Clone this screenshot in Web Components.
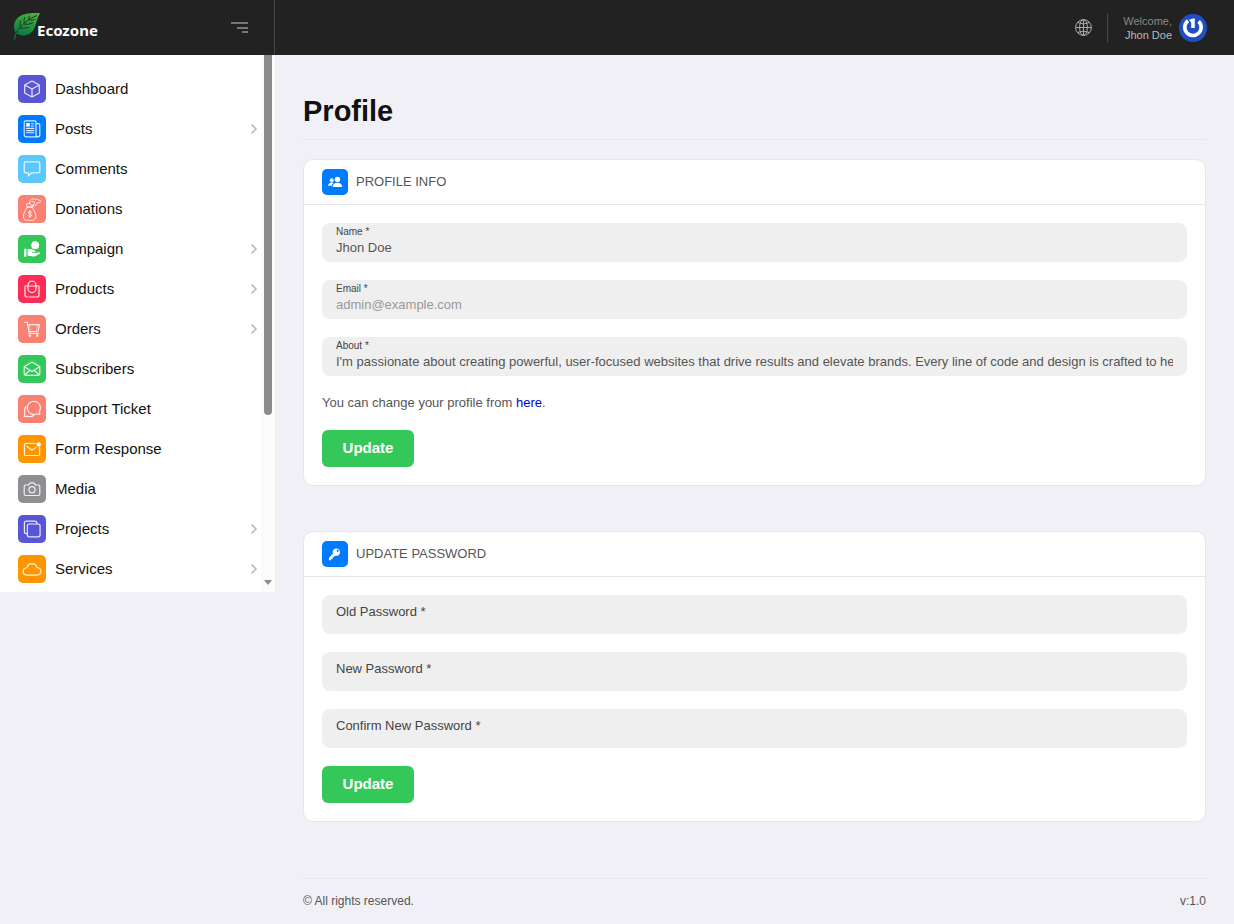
<!DOCTYPE html>
<html lang="en">
<head>
<meta charset="utf-8">
<meta name="viewport" content="width=device-width, initial-scale=1">
<title>Ecozone - Profile</title>
<style>
  html { background: #f1f0f6; }
  body { margin: 0; font-family: "Liberation Sans", Arial, sans-serif; font-size: 13px; line-height: 18px; color: #555; }
</style>
</head>
<body>
<admin-app></admin-app>

<script>
const icons = {
  cube: '<path d="M14 6 21.3 10v8L14 22 6.7 18v-8ZM6.7 10 14 14l7.3-4M14 14v8"/>',
  news: '<path d="M18 20.2V7.2Q18 5.8 16.6 5.8H7.6Q6.2 5.8 6.2 7.2V19.6Q6.2 21.8 8.4 21.8H20Q18 21.6 18 19.8M18 8.6h2.4Q21.8 8.6 21.8 10v9.8q0 2-1.9 2"/><path d="M13.4 8.7h2.4M13.4 11h2.4M8.5 13.4h7.3M8.5 15.6h7.3M8.5 17.8h7.3" stroke-width="1.1"/><path fill="#fff" stroke="none" d="M8.2 8h3.6v3.6H8.2z"/>',
  chat: '<path d="M7.8 6.8h12.4q1.6 0 1.6 1.6v7.8q0 1.6-1.6 1.6h-6.4l-3.4 3v-3H7.8q-1.6 0-1.6-1.6V8.400q0-1.600 1.600-1.600Z"/>',
  donate: '<g stroke-width=".9"><path d="M9.400 12.200c-2 2.600-3.900 6-3.900 9.300 0 2.600 1.400 3.900 3.700 3.900h5c2.400 0 3.700-1.300 3.700-3.900 0-3.300-1.900-6.700-3.900-9.300ZM8.600 12.200h6.200M9.600 11.800 8.300 9.300q2.400-2 4-.8M14 11.600l1-2M11.400 8.600c0-2.600 1-4.400 3.400-4.700l4.400.4 3.400 1.500M12.200 8.800q1 2.200 2.700 2.200 4 0 3.600-2.700l3.700-1M13.800 6.600h2.200l.9 1.700-1.900 1.800"/><path d="M13.700 17.300q-1.800-1.300-3.100-.2-1 1.300 1.200 1.900 2.300.6 1.400 2-1.300 1.200-3.100-.2M11.900 15.600v6.800"/></g>',
  hand: '<g fill="#fff" stroke="none"><path d="M6.200 13.800h2.200v7.900H6.200zM9.600 14h3.600l3.800 1.500q1 .8.300 1.700h-3.200v.8h3.700l2.900-.7q1.500.2 1.300 1.300L16.800 21.400q-.8.300-1.800.1L9.600 20.400Z"/><circle cx="17.200" cy="10.200" r="3.900"/></g>',
  bag: '<path d="M7 11h14v9q0 2-2 2H9q-2 0-2-2Z" stroke-linejoin="round"/><path d="M10 13.500V10.200a4 4 0 0 1 8 0v3.300a4 4 0 0 1-8 0Z"/>',
  cart: '<path d="M6.700 7.300h2.600L11.200 18.400h9M9.700 9.700h11.700l-1.400 6.800H11"/><path d="M12.200 15.800 11.500 10M19.300 10l-.8 6" stroke-width=".6"/><circle cx="11.900" cy="20.600" r=".7"/><circle cx="19.400" cy="20.600" r=".7"/>',
  mailopen: '<path d="M6.200 11.600 14 7l7.800 4.600v7.200q0 1.600-1.600 1.600H7.800q-1.600 0-1.600-1.600ZM6.800 12l7.200 4.600L21.200 12M7.200 19.700l4.500-4.400M20.800 19.700l-4.500-4.400"/>',
  bubbles: '<path d="M16 6.300a6.600 6.600 0 0 1 5.400 10.100l.4 3-3-.6A6.600 6.600 0 1 1 16 6.300Z"/><path d="M8.200 11.500Q5.700 14 6.900 17.800L6.200 21.600l3.600-.5q3.200 1.400 5.800-.5"/>',
  mail: '<path d="M17.600 8.300H8Q6.400 8.300 6.400 9.900v9q0 1.600 1.600 1.600h12q1.600 0 1.600-1.600v-6.400M8.700 11.300 14 15.300l4-3"/><circle cx="20.600" cy="9.400" r="2.200" fill="#fff" stroke="none"/>',
  camera: '<path d="M7.700 10h2.800l1.700-2.100h3.600l1.700 2.100h2.800q1.500 0 1.500 1.500V19q0 1.500-1.500 1.500H7.700Q6.200 20.500 6.200 19v-7.500Q6.200 10 7.700 10Z"/><circle cx="14" cy="14.800" r="3.100"/>',
  copies: '<path d="M18.900 9V8q0-1.900-1.900-1.900H8.300Q6.400 6.100 6.400 8v8.700q0 1.900 1.900 1.900h1"/><rect x="9.300" y="9" width="12.800" height="12.800" rx="2"/>',
  cloud: '<path d="M9.200 20.100q-4-.2-4.100-3.700.2-3 3.700-3.500.9-4.200 5.200-4.300 4 .1 5 4 3.900.3 4 3.700-.2 3.600-3.800 3.800Z"/>',
  people: '<g fill="#fff" stroke="none"><circle cx="16.600" cy="11.200" r="2.900"/><path d="M11.400 19.400q.2-4.300 5.200-4.500 5 .2 5.200 4.500Z"/><circle cx="10.500" cy="12.100" r="2.100"/><path d="M6.600 18q.3-3.200 4-3.400 1.100 0 2 .4-1.900 1.200-2.100 3Z"/></g>',
  key: '<path fill="#fff" stroke="none" fill-rule="evenodd" d="M14.300 15.800a4 4 0 1 0-2.500-2.300L7.400 18.200v2.600h2.300l.3-1.500h1.300l.2-1.500ZM16.900 9.400a1.200 1.200 0 1 1 0 2.400 1.200 1.200 0 0 1 0-2.400Z"/>'
};

/* Registers a component whose shadow root is cloned from a template. */
function define(name, build) {
  customElements.define(name, class extends HTMLElement {
    constructor() {
      super();
      this.attachShadow({ mode: 'open' });
    }
    connectedCallback() {
      if (this.shadowRoot.childNodes.length) return;
      const t = document.createElement('template');
      t.innerHTML = build(n => this.getAttribute(n) || '', this);
      this.shadowRoot.append(t.content.cloneNode(true));
    }
  });
}

define('icon-tile', a => `
  <style>
    :host { display: block; flex: none; width: var(--tile, 28px); height: var(--tile, 28px); border-radius: 5px; background: ${a('color')}; }
    svg { display: block; width: 100%; height: 100%; }
  </style>
  <svg viewBox="0 0 28 28" fill="none" stroke="#fff" stroke-opacity=".85" stroke-width="1.200" stroke-linejoin="round" stroke-linecap="round" aria-hidden="true">${icons[a('icon')]}</svg>`);

define('menu-item', (a, el) => `
  <style>
    :host { display: block; }
    a { display: flex; align-items: center; gap: 9px; color: #111; font-size: 15px; line-height: 20px; text-decoration: none; }
    span { flex: 1; }
    .chevron { width: 8px; height: 12px; margin-right: 3px; fill: none; stroke: #b4b4b8; stroke-width: 1.500; }
  </style>
  <a href="#">
    <icon-tile icon="${a('icon')}" color="${a('color')}"></icon-tile>
    <span><slot></slot></span>
    ${el.hasAttribute('expandable') ? '<svg class="chevron" viewBox="0 0 8 12" aria-hidden="true"><path d="M1.500 1.500 6 6l-4.500 4.500"/></svg>' : ''}
  </a>`);

define('side-menu', () => `
  <style>
    :host { display: flex; background: #fff; }
    nav { flex: 1; display: flex; flex-direction: column; gap: 12px; padding: 20px 0 9px 18px; }
    .track { width: 14px; background: #fbfbfb; display: flex; flex-direction: column; align-items: center; justify-content: space-between; padding-bottom: 7px; box-sizing: border-box; }
    .thumb { width: 8px; height: 68%; background: #8b8b8b; border-radius: 0 0 4px 4px; }
    .arrow { border: 4px solid transparent; border-top: 5px solid #8b8b8b; border-bottom: 0; }
  </style>
  <nav aria-label="Main">
    <menu-item icon="cube" color="#5856d6">Dashboard</menu-item>
    <menu-item icon="news" color="#007aff" expandable>Posts</menu-item>
    <menu-item icon="chat" color="#5ac8fa">Comments</menu-item>
    <menu-item icon="donate" color="#fa8072">Donations</menu-item>
    <menu-item icon="hand" color="#34c759" expandable>Campaign</menu-item>
    <menu-item icon="bag" color="#ff2d55" expandable>Products</menu-item>
    <menu-item icon="cart" color="#fa8072" expandable>Orders</menu-item>
    <menu-item icon="mailopen" color="#34c759">Subscribers</menu-item>
    <menu-item icon="bubbles" color="#fa8072">Support Ticket</menu-item>
    <menu-item icon="mail" color="#ff9500">Form Response</menu-item>
    <menu-item icon="camera" color="#8e8e93">Media</menu-item>
    <menu-item icon="copies" color="#5856d6" expandable>Projects</menu-item>
    <menu-item icon="cloud" color="#ff9500" expandable>Services</menu-item>
  </nav>
  <div class="track" aria-hidden="true"><div class="thumb"></div><div class="arrow"></div></div>`);

define('top-bar', () => `
  <style>
    :host { display: flex; height: 55px; background: #222; color: #bbb; }
    svg { display: block; }
    .brand { flex: none; width: 275px; box-sizing: border-box; border-right: 1px solid #444; display: flex; align-items: center; justify-content: space-between; padding: 0 25px 0 12px; }
    .logo { display: flex; align-items: center; color: #fff; text-decoration: none; font: bold 15px/24px "Noto Sans", sans-serif; }
    .logo svg { width: 29px; height: 30px; margin: 0 -4px 4px 0; }
    .logo span { padding-top: 4px; }
    button { border: 0; padding: 0; background: none; cursor: pointer; }
    .right { flex: 1; display: flex; align-items: center; justify-content: flex-end; padding-right: 27px; }
    .user { display: flex; align-items: center; gap: 7px; margin-left: 15px; padding-left: 15px; border-left: 1px solid #4a4a4a; color: inherit; text-decoration: none; text-align: right; font-size: 11px; line-height: 14px; }
    .hi { color: #888; }
  </style>
  <div class="brand">
    <a class="logo" href="#">
      <svg viewBox="0 0 29 30" aria-hidden="true">
        <defs><linearGradient id="leaf" x1=".7" y1="0" x2=".3" y2="1"><stop offset="0" stop-color="#4caf3c"/><stop offset="1" stop-color="#087a43"/></linearGradient></defs>
        <path fill="url(#leaf)" d="M28.300 2.200C21 1.600 10 2 5 7.500 1 12 1.600 18 3.600 21.500c5.400 5 14.600 3.700 18.400-3.500 2.700-5.500 2.800-11.500 6.300-15.800Z"/>
        <path d="M2.600 28.500q0-4.500 3.200-9" fill="none" stroke="#0d7d43" stroke-width="1.200"/>
        <path d="M3.800 22.500C8 15 15 8.500 25 4.500M8.500 16.300Q7.500 13 8.600 9.500M12.400 12.300q-1-3 .2-6M17 8.800q-.6-2 .4-4M8 17q4.500.8 9-.6M12 13.200q5 .6 9-1.400M17.500 9.200q3 .2 5.200-.8" fill="none" stroke="#1c3a22" stroke-width="1"/>
      </svg>
      <span>Ecozone</span>
    </a>
    <button type="button" aria-label="Toggle menu">
      <svg width="18" height="14" viewBox="0 0 18 14" fill="#777"><path d="M0 1h17v2H0zM6 6h11v2H6zM11 10h6v2h-6z"/></svg>
    </button>
  </div>
  <div class="right">
    <button type="button" aria-label="Language">
      <svg width="17" height="17" viewBox="0 0 17 17" fill="none" stroke="#aaa"><circle cx="8.500" cy="8.500" r="7.900"/><ellipse cx="8.500" cy="8.500" rx="3.900" ry="7.900"/><path d="M8.500.6v15.800M.6 8.500h15.800M2.700 3.500q5.800 3 11.600 0M2.700 13.500q5.800-3 11.600 0"/></svg>
    </button>
    <a class="user" href="#">
      <span><span class="hi">Welcome,</span><br>Jhon Doe</span>
      <svg width="28" height="28" viewBox="0 0 28 28" aria-hidden="true"><circle cx="14" cy="14" r="14" fill="#1f4fc0"/><path d="M9 6.800A8.200 8.200 0 1 0 19.600 7.400" fill="none" stroke="#fff" stroke-width="3.600"/><path d="M10 6Q12.500 4 15.800 4.600V14h-3.600V8.600Z" fill="#fff"/></svg>
    </a>
  </div>`);

define('panel-card', a => `
  <style>
    :host { display: block; background: #fff; border: 1px solid #e5e5ea; border-radius: 10px; }
    header { display: flex; align-items: center; gap: 8px; padding: 9px 18px; border-bottom: 1px solid #e5e5ea; --tile: 26px; }
    h2 { margin: 0; font-size: 13px; font-weight: normal; text-transform: uppercase; color: #555; }
    .body { display: flex; flex-direction: column; gap: 18px; padding: 18px; }
  </style>
  <header><icon-tile icon="${a('icon')}" color="#007aff"></icon-tile><h2>${a('heading')}</h2></header>
  <div class="body"><slot></slot></div>`);

define('text-field', a => {
  const empty = !a('value');
  return `
  <style>
    :host { display: grid; }
    label, input { grid-area: 1 / 1; }
    label { justify-self: start; pointer-events: none; z-index: 1; padding: ${empty ? '8px 14px' : '2px 14px'}; font-size: ${empty ? '13px' : '10px'}; line-height: ${empty ? '18px' : '14px'}; color: #444; }
    input { width: 100%; height: 39px; box-sizing: border-box; border: 0; border-radius: 8px; background: #efefef; padding: 10px 14px 0 14px; font: inherit; color: #555; outline: 0; }
    input:disabled { color: #999; }
  </style>
  <label for="f">${a('label')} *</label>
  <input id="f" type="${a('type') || 'text'}" value="${a('value')}" ${a('state')}>`;
});

define('action-button', () => `
  <style>
    :host { display: flex; }
    button { width: 92px; height: 37px; padding: 0 0 2px; border: 0; border-radius: 6px; background: #34c759; color: #fff; font: bold 15px/20px "Liberation Sans", Arial, sans-serif; cursor: pointer; }
  </style>
  <button type="submit"><slot></slot></button>`);

define('profile-page', () => `
  <style>
    :host { display: flex; flex-direction: column; padding: 36px 28px 0; }
    h1 { margin: 0 0 19px; padding-bottom: 8px; border-bottom: 1px solid #e6e6ec; font-size: 29px; line-height: 40px; color: #111; }
    form { margin-bottom: 45px; }
    p { margin: 0; }
    p a { color: #0000dd; text-decoration: none; }
    footer { display: flex; justify-content: space-between; margin-top: 11px; padding: 13px 0; border-top: 1px solid #e6e6ec; font-size: 12px; }
  </style>
  <h1>Profile</h1>
  <form>
    <panel-card icon="people" heading="Profile Info">
      <text-field label="Name" value="Jhon Doe"></text-field>
      <text-field label="Email" type="email" value="admin@example.com" state="disabled"></text-field>
      <text-field label="About" value="I'm passionate about creating powerful, user-focused websites that drive results and elevate brands. Every line of code and design is crafted to help businesses grow."></text-field>
      <p>You can change your profile from <a href="#">here</a>.</p>
      <action-button>Update</action-button>
    </panel-card>
  </form>
  <form>
    <panel-card icon="key" heading="Update Password">
      <text-field label="Old Password" type="password"></text-field>
      <text-field label="New Password" type="password"></text-field>
      <text-field label="Confirm New Password" type="password"></text-field>
      <action-button>Update</action-button>
    </panel-card>
  </form>
  <footer><span>© All rights reserved.</span><span>v:1.0</span></footer>`);

define('admin-app', () => `
  <style>
    :host { display: block; }
    .layout { display: grid; grid-template-columns: 275px minmax(0, 1fr); align-items: start; }
  </style>
  <top-bar></top-bar>
  <div class="layout">
    <side-menu></side-menu>
    <main><profile-page></profile-page></main>
  </div>`);
</script>
</body>
</html>
